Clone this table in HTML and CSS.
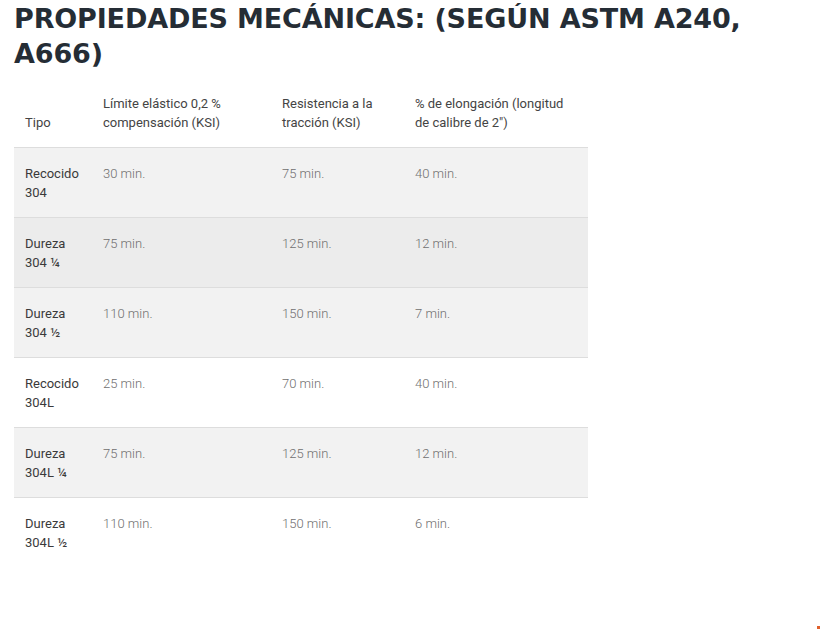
FILE: index.html
```html
<!DOCTYPE html>
<html lang="es">
<head>
<meta charset="utf-8">
<title>Propiedades mecánicas</title>
<link rel="stylesheet" href="styles.css">
</head>
<body>
<main class="page">
  <h2 class="title">PROPIEDADES MECÁNICAS: (SEGÚN ASTM A240, A666)</h2>
  <table class="props">
    <colgroup>
      <col class="c1"><col class="c2"><col class="c3"><col class="c4">
    </colgroup>
    <thead>
      <tr>
        <th>Tipo</th>
        <th>Límite elástico 0,2 % compensación (KSI)</th>
        <th>Resistencia a la tracción (KSI)</th>
        <th>% de elongación (longitud de calibre de 2")</th>
      </tr>
    </thead>
    <tbody>
      <tr class="odd"><td class="type">Recocido 304</td><td>30 min.</td><td>75 min.</td><td>40 min.</td></tr>
      <tr class="hover"><td class="type">Dureza 304 ¼</td><td>75 min.</td><td>125 min.</td><td>12 min.</td></tr>
      <tr class="odd"><td class="type">Dureza 304 ½</td><td>110 min.</td><td>150 min.</td><td>7 min.</td></tr>
      <tr><td class="type">Recocido 304L</td><td>25 min.</td><td>70 min.</td><td>40 min.</td></tr>
      <tr class="odd"><td class="type">Dureza 304L ¼</td><td>75 min.</td><td>125 min.</td><td>12 min.</td></tr>
      <tr class="last"><td class="type">Dureza 304L ½</td><td>110 min.</td><td>150 min.</td><td>6 min.</td></tr>
    </tbody>
  </table>
</main>
<span class="dot"></span>
</body>
</html>
```
FILE: styles.css
```css
html, body {
  margin: 0;
  padding: 0;
  background: #ffffff;
}
.page {
  padding: 0 14px;
}
.title {
  margin: 0;
  padding-top: 1px;
  width: 760px;
  font-family: "DejaVu Sans", sans-serif;
  font-weight: bold;
  font-size: 27px;
  line-height: 35px;
  letter-spacing: -0.15px;
  color: #252d35;
}
.props {
  margin-top: 7px;
  width: 574px;
  border-collapse: collapse;
  table-layout: fixed;
  font-family: Roboto, "Liberation Sans", sans-serif;
  font-size: 13px;
  line-height: 19px;
}
.c1 { width: 78px; }
.c2 { width: 179px; }
.c3 { width: 133px; }
.c4 { width: 184px; }
.props th {
  text-align: left;
  vertical-align: bottom;
  font-weight: 400;
  color: #444444;
  padding: 16px 11px 15px 11px;
}
.props thead tr {
  border-bottom: 1px solid #dddddd;
}
.props td {
  vertical-align: top;
  padding: 16px 11px 15px 11px;
  height: 38px;
  color: #6f6f6f;
  font-weight: 300;
}
.props td.type {
  color: #3a3a3a;
  font-weight: 400;
}
.props tbody tr {
  border-bottom: 1px solid #dddddd;
}
.props tbody tr.last {
  border-bottom: none;
}
.props tr.odd {
  background: #f2f2f2;
}
.props tr.hover {
  background: #ececec;
}
.dot {
  position: absolute;
  left: 817px;
  top: 626px;
  width: 3px;
  height: 3px;
  background: #e0602c;
}
```
